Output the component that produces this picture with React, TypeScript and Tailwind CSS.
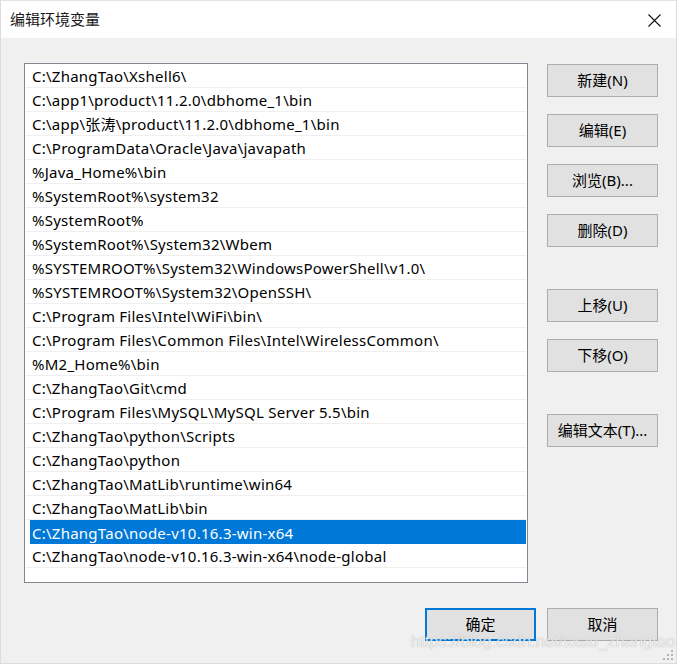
import React from "react";

const paths = [
  "C:\\ZhangTao\\Xshell6\\",
  "C:\\app1\\product\\11.2.0\\dbhome_1\\bin",
  "C:\\app\\张涛\\product\\11.2.0\\dbhome_1\\bin",
  "C:\\ProgramData\\Oracle\\Java\\javapath",
  "%Java_Home%\\bin",
  "%SystemRoot%\\system32",
  "%SystemRoot%",
  "%SystemRoot%\\System32\\Wbem",
  "%SYSTEMROOT%\\System32\\WindowsPowerShell\\v1.0\\",
  "%SYSTEMROOT%\\System32\\OpenSSH\\",
  "C:\\Program Files\\Intel\\WiFi\\bin\\",
  "C:\\Program Files\\Common Files\\Intel\\WirelessCommon\\",
  "%M2_Home%\\bin",
  "C:\\ZhangTao\\Git\\cmd",
  "C:\\Program Files\\MySQL\\MySQL Server 5.5\\bin",
  "C:\\ZhangTao\\python\\Scripts",
  "C:\\ZhangTao\\python",
  "C:\\ZhangTao\\MatLib\\runtime\\win64",
  "C:\\ZhangTao\\MatLib\\bin",
  "C:\\ZhangTao\\node-v10.16.3-win-x64",
  "C:\\ZhangTao\\node-v10.16.3-win-x64\\node-global",
];

const SELECTED = 19;

function Btn({ label, primary = false }: { label: string; primary?: boolean }) {
  return (
    <div
      className={
        primary
          ? "w-[111px] h-[33px] bg-[#e1e1e1] border-2 border-[#0078d7] flex items-center justify-center text-[15px] text-black"
          : "w-[111px] h-[33px] bg-[#e1e1e1] border border-[#adadad] flex items-center justify-center text-[15px] text-black"
      }
    >
      {label}
    </div>
  );
}

export default function App() {
  return (
    <div className="relative w-[677px] h-[664px] bg-[#f0f0f0] overflow-hidden font-['Segoe_UI','Noto_Sans','Noto_Sans_CJK_SC',sans-serif] text-[15px] text-black border-l border-b border-r border-[#dcdcdc]">
      {/* title bar */}
      <div className="h-[38px] bg-white flex items-center justify-between pl-[9px] pr-[15px] border-t border-[#e3e3e3]">
        <span className="text-[15px] text-[#1a1a1a] font-['Noto_Sans_CJK_SC',sans-serif]">编辑环境变量</span>
        <svg width="13" height="13" viewBox="0 0 13 13" className="mt-[1px]">
          <path d="M0.5 0.5 L12.5 12.5 M12.5 0.5 L0.5 12.5" stroke="#111" strokeWidth="1.1" fill="none" />
        </svg>
      </div>

      {/* body */}
      <div className="flex pt-[25px] pl-[23px] gap-[19px]">
        <div className="w-[504px] h-[520px] bg-white border border-[#828790] px-[1px]">
          {paths.map((p, i) =>
            i === SELECTED ? (
              <div key={i} className="h-[24px] flex">
                <div className="ml-[4px] flex-1 bg-[#0078d7] text-white flex items-center pl-[2px] pt-[2px] leading-none tracking-[0.25px] whitespace-nowrap">
                  {p}
                </div>
              </div>
            ) : (
              <div
                key={i}
                className="h-[24px] border-b border-[#efefef] flex items-center pl-[6px] pt-[2px] leading-none tracking-[0.25px] whitespace-nowrap"
              >
                {p}
              </div>
            )
          )}
        </div>

        <div className="flex flex-col pt-[1px]">
          <Btn label="新建(N)" />
          <div className="h-[17px]" />
          <Btn label="编辑(E)" />
          <div className="h-[17px]" />
          <Btn label="浏览(B)..." />
          <div className="h-[17px]" />
          <Btn label="删除(D)" />
          <div className="h-[42px]" />
          <Btn label="上移(U)" />
          <div className="h-[17px]" />
          <Btn label="下移(O)" />
          <div className="h-[42px]" />
          <Btn label="编辑文本(T)..." />
        </div>
      </div>

      {/* bottom buttons */}
      <div className="flex justify-end gap-[11px] pr-[18px] pt-[25px]">
        <Btn label="确定" primary />
        <Btn label="取消" />
      </div>

      {/* watermark */}
      <div className="absolute left-[410px] top-[633px] text-[16.5px] leading-none text-white/80 font-['Liberation_Sans',sans-serif] [text-shadow:0_0_1px_rgba(0,0,0,0.35)] whitespace-nowrap pointer-events-none">
        https://blog.csdn.net/sxau_zhangtao
      </div>

      {/* resize grip */}
      <svg width="12" height="12" viewBox="0 0 12 12" className="absolute right-[1px] bottom-[1px]">
        <rect x="8" y="0" width="2" height="2" fill="#b4b4b4" />
        <rect x="4" y="4" width="2" height="2" fill="#b4b4b4" />
        <rect x="8" y="4" width="2" height="2" fill="#b4b4b4" />
        <rect x="0" y="8" width="2" height="2" fill="#b4b4b4" />
        <rect x="4" y="8" width="2" height="2" fill="#b4b4b4" />
        <rect x="8" y="8" width="2" height="2" fill="#b4b4b4" />
      </svg>
    </div>
  );
}
